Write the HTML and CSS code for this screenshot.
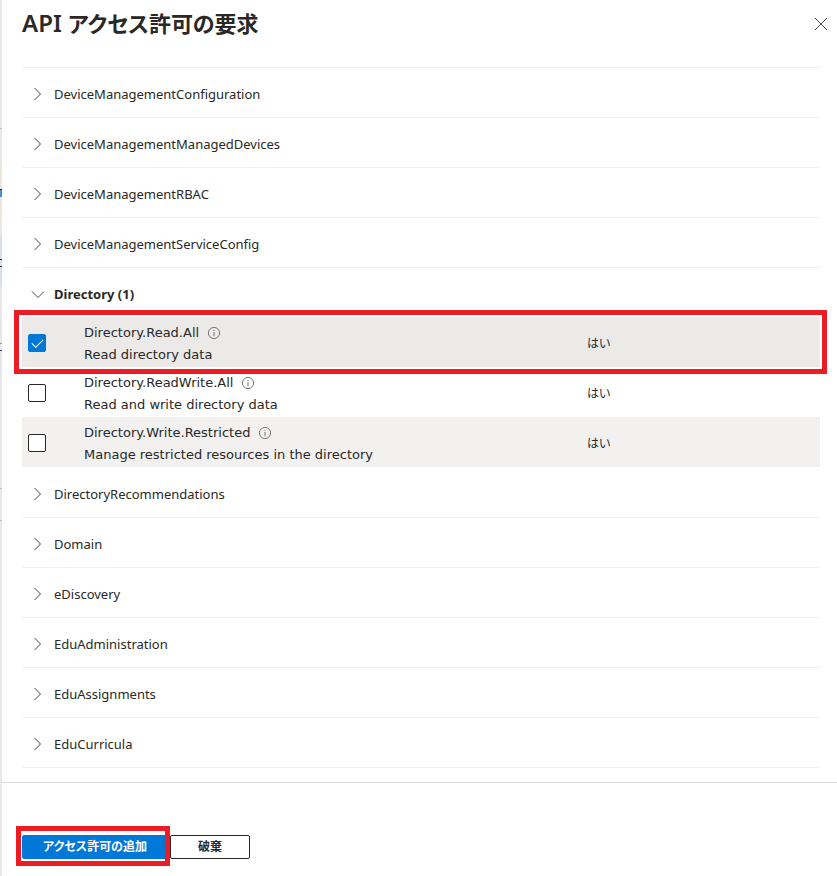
FILE: index.html
```
<!DOCTYPE html>
<html lang="ja">
<head>
<meta charset="utf-8">
<title>API アクセス許可の要求</title>
<link rel="stylesheet" href="styles.css">
</head>
<body>
<svg class="defs" aria-hidden="true">
  <symbol id="chevron" viewBox="0 0 14 14"><path d="M3.5 1 L9.5 7 L3.5 13"/></symbol>
  <symbol id="chevron-down" viewBox="0 0 14 14"><path d="M1 4.5 L7 10.5 L13 4.5"/></symbol>
  <symbol id="info" viewBox="0 0 14 14"><circle cx="7" cy="7" r="5.6"/><path d="M7 6 V10.2 M7 4 V5"/></symbol>
</svg>
<div class="shell">
  <div class="backdrop"></div>
  <main class="panel">
    <header class="header">
      <h1 class="title">API <span class="title-ja">アクセス許可の要求</span></h1>
      <button class="close" type="button" aria-label="閉じる"><svg viewBox="0 0 14 14"><path d="M1 1 L13 13 M13 1 L1 13"/></svg></button>
    </header>
    <section class="list">
      <button class="group" type="button"><svg class="icon"><use href="#chevron"/></svg>DeviceManagementConfiguration</button>
      <button class="group" type="button"><svg class="icon"><use href="#chevron"/></svg>DeviceManagementManagedDevices</button>
      <button class="group" type="button"><svg class="icon"><use href="#chevron"/></svg>DeviceManagementRBAC</button>
      <button class="group" type="button"><svg class="icon"><use href="#chevron"/></svg>DeviceManagementServiceConfig</button>
      <button class="group open" type="button" aria-expanded="true"><svg class="icon"><use href="#chevron-down"/></svg>Directory (1)</button>
      <div class="permissions">
        <table class="table">
          <tbody>
            <tr class="row selected">
              <td class="check"><input id="p1" type="checkbox" checked></td>
              <td class="name"><label for="p1"><span class="scope">Directory.Read.All<svg class="info"><use href="#info"/></svg></span><span class="scope">Read directory data</span></label></td>
              <td class="consent">はい</td>
            </tr>
            <tr class="row">
              <td class="check"><input id="p2" type="checkbox"></td>
              <td class="name"><label for="p2"><span class="scope">Directory.ReadWrite.All<svg class="info"><use href="#info"/></svg></span><span class="scope">Read and write directory data</span></label></td>
              <td class="consent">はい</td>
            </tr>
            <tr class="row shaded">
              <td class="check"><input id="p3" type="checkbox"></td>
              <td class="name"><label for="p3"><span class="scope">Directory.Write.Restricted<svg class="info"><use href="#info"/></svg></span><span class="scope">Manage restricted resources in the directory</span></label></td>
              <td class="consent">はい</td>
            </tr>
          </tbody>
        </table>
        <div class="mark mark-row"></div>
      </div>
      <button class="group" type="button"><svg class="icon"><use href="#chevron"/></svg>DirectoryRecommendations</button>
      <button class="group" type="button"><svg class="icon"><use href="#chevron"/></svg>Domain</button>
      <button class="group" type="button"><svg class="icon"><use href="#chevron"/></svg>eDiscovery</button>
      <button class="group" type="button"><svg class="icon"><use href="#chevron"/></svg>EduAdministration</button>
      <button class="group" type="button"><svg class="icon"><use href="#chevron"/></svg>EduAssignments</button>
      <button class="group" type="button"><svg class="icon"><use href="#chevron"/></svg>EduCurricula</button>
    </section>
    <footer class="footer">
      <div class="marked">
        <button class="btn primary" type="button">アクセス許可の追加</button>
        <div class="mark mark-button"></div>
      </div>
      <button class="btn" type="button">破棄</button>
    </footer>
  </main>
</div>
</body>
</html>
```
FILE: styles.css
```
* { box-sizing: border-box; }
body {
  margin: 0;
  background: #fff;
  color: #292827;
  font: 13px/22px "Noto Sans", "Noto Sans CJK JP", sans-serif;
  font-feature-settings: "palt";
}
button { font: inherit; font-feature-settings: inherit; color: inherit; }
svg { fill: none; stroke: #444; stroke-width: 1; }
.defs { display: none; }
.shell { display: flex; min-height: 100vh; }
.backdrop {
  width: 2px;
  flex: none;
  background: linear-gradient(#e8e8e8 128px, #bbb 128px 129px, #e8e8e8 129px 168px,
    #efe3d8 168px 189px, #222 189px 190px, #4a90d0 190px 197px, #efe3d8 197px 218px,
    #e8e8e8 218px 237px, #dadfee 237px 259px, #222 259px 260px, #dadfee 260px 266px,
    #222 266px 267px, #dadfee 267px 287px, #e8e8e8 287px 343px, #6f9fd0 343px 344px,
    #e8e8e8 344px 350px, #223366 350px 351px, #e8e8e8 351px 488px, #bbb 488px 489px,
    #e8e8e8 489px 520px, #bbb 520px 521px, #e8e8e8 521px);
}
.panel { flex: 1; min-width: 0; display: flex; flex-direction: column; }
.header {
  display: flex;
  justify-content: space-between;
  align-items: center;
  height: 48px;
  padding: 0 8px 0 20px;
}
.title { margin: 0; font-size: 24px; line-height: 30px; font-weight: 600; padding-bottom: 2px; }
.title-ja { font-size: 22px; }
.close { width: 16px; height: 16px; padding: 1px; border: 0; background: none; display: flex; }
.close svg { width: 14px; height: 14px; }
.list { margin: 19px 17px 0 20px; border-top: 1px solid #f0f0f0; }
.group {
  display: flex;
  align-items: center;
  gap: 9px;
  width: 100%;
  height: 50px;
  padding: 2px 9px 0;
  border: 0;
  border-bottom: 1px solid #f0f0f0;
  background: none;
  text-align: left;
}
.group.open { font-weight: bold; border-bottom: 0; }
.icon { width: 14px; height: 14px; flex: none; }
.permissions { position: relative; margin-top: -1px; padding-bottom: 1px; }
.table { width: 100%; border-collapse: collapse; table-layout: fixed; }
.row { height: 50px; }
.selected { background: #ebeae9; }
.shaded { background: #f2f1f0; }
.row td { padding: 2px 0 0; }
.row .check { width: 62px; padding-left: 6px; }
.row .name { padding-top: 4px; font-family: "DejaVu Sans", sans-serif; }
.row .consent { width: 233px; padding-top: 4px; font-size: 12px; }
.scope { display: flex; align-items: center; gap: 8px; }
.info { width: 14px; height: 14px; stroke: #777; }
.check input {
  appearance: none;
  display: block;
  width: 18px;
  height: 18px;
  margin: 0;
  border: 1px solid #292827;
  border-radius: 2px;
  background: #fff;
}
.check input:checked {
  border-color: #0078d7;
  background: #0078d7;
}
.check input:checked::after {
  content: "";
  display: block;
  width: 10px;
  height: 5px;
  margin: 4px 0 0 3px;
  border: solid #fff;
  border-width: 0 0 1px 1px;
  transform: rotate(-45deg);
}
.mark { position: absolute; border: 5px solid #ed1c24; pointer-events: none; }
.mark-row { top: -7px; left: -8px; right: -7px; height: 64px; }
.footer {
  display: flex;
  gap: 2px;
  flex: 1;
  align-items: flex-start;
  margin-top: 14px;
  padding: 52px 20px 16px;
  border-top: 1px solid #dcdcdc;
}
.marked { position: relative; }
.mark-button { top: -9px; left: -6px; right: -2px; height: 40px; }
.btn {
  display: block;
  min-width: 80px;
  height: 24px;
  padding: 0 19px;
  border: 1px solid #292827;
  border-radius: 2px;
  background: #fff;
  font-size: 12px;
  font-weight: bold;
  line-height: 20px;
}
.primary { min-width: 146px; border-color: #0078d7; background: #0078d7; color: #fff; }
```
